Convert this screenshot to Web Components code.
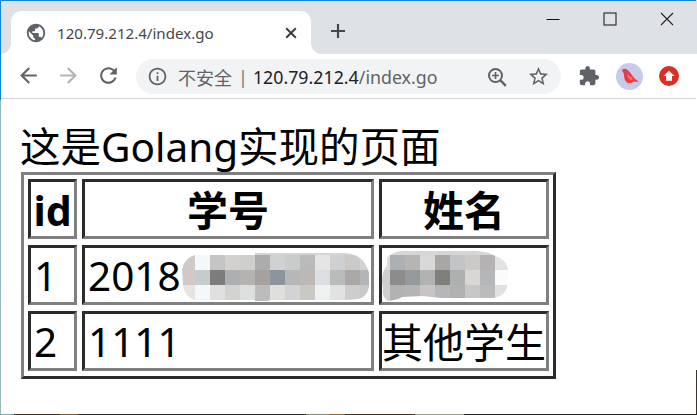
<!DOCTYPE html>
<html lang="zh"><head><meta charset="utf-8"><title>120.79.212.4/index.go</title>
<style>html,body{margin:0;padding:0;height:100%;overflow:hidden;background:#fff}</style></head>
<body>
<x-window>
  <x-tabstrip slot="strip"></x-tabstrip>
  <x-toolbar slot="bar"></x-toolbar>
  <x-page slot="page">
    <x-heading>这是Golang实现的页面</x-heading>
    <x-table>
      <x-cell head>id</x-cell><x-cell head>学号</x-cell><x-cell head>姓名</x-cell>
      <x-cell>1</x-cell>
      <x-cell>2018<x-mosaic x="95" y="5" w="190" h="49" t="17" ox="0" strip="2" stripc="#d3d4d4" d="M15 2L75 2L75 0L165 0Q185 2 189 20L189 34Q187 44 178 46L165 47L90 47L88 48L75 48L75 47L15 47Q5 45 3 32L2 17Q4 5 15 2Z" data-c="#cdcac8,#f4f8fa,#c5c5c5,#d2d1cf,#cfcfcd,#acacac,#d0d2d2,#c9cbcd,#bababa,#e5e5e5,#cfd0d2,#cbcac8,#d2d2d2;#d0c9c7,#c6ccce,#7c7c7c,#adafb1,#b5b3af,#a5a19e,#8d959c,#b6b8b8,#bcb9b4,#dbdfe2,#babcbb,#aaa8a6,#b3b5b8;#e6e4e2,#f4f8fb,#e0e0e0,#d3d3d1,#dcdfde,#bcbcbc,#dfdfdc,#d2d3d6,#c9c8c3,#eff0f2,#e1e3e2,#cdcdcb,#c6c8ca"></x-mosaic></x-cell>
      <x-cell><x-mosaic x="0" y="3" w="127" h="51" t="19" ox="-7" strip="4" stripc="#d6d6d6" d="M5 7Q10 1 20 0L95 0Q108 1 113 5Q124 8 126 18L126 33Q124 45 112 47L60 47L40 45L20 46Q15 49 6 50Q0 47 1 38L0 30Q0 20 5 14Z" data-c="#dcdcdc,#acb0b3,#b7b5b4,#d9d9d9,#a9a7a6,#c1c5c8,#cccac8,#b5b2b3,#e0e2e4;#cfcfcf,#8e8c8b,#959a9c,#b0b3b2,#807f7a,#aeb0b0,#d8d7d5,#b4b6b9,#fbfbfc;#cfcfcf,#b2b2b2,#b4b4b4,#c8c4c3,#b4b6ba,#b1b1b1,#c8c7c5,#bcbbbb,#dfe0e2"></x-mosaic></x-cell>
      <x-cell>2</x-cell><x-cell>1111</x-cell><x-cell big>其他学生</x-cell>
    </x-table>
  </x-page>
</x-window>
<script>
const FONT='"Noto Sans","Noto Sans CJK SC",sans-serif';
function def(name,html,init){customElements.define(name,class extends HTMLElement{
  constructor(){super();this.attachShadow({mode:'open'}).innerHTML=html}
  connectedCallback(){if(init)init(this)}
})}
const I=(s,d,c='#5f6368')=>`<svg width="${s}" height="${s}" viewBox="0 0 24 24" fill="${c}"><path d="${d}"/></svg>`;
const P={
 back:'M20 11H7.83l5.59-5.59L12 4l-8 8 8 8 1.41-1.41L7.83 13H20v-2z',
 fwd:'M12 4l-1.41 1.41L16.17 11H4v2h12.17l-5.58 5.59L12 20l8-8z',
 reload:'M17.65 6.35C16.2 4.9 14.21 4 12 4c-4.42 0-7.99 3.58-7.99 8s3.57 8 7.99 8c3.73 0 6.84-2.55 7.73-6h-2.08c-.82 2.33-3.04 4-5.65 4-3.31 0-6-2.69-6-6s2.69-6 6-6c1.66 0 3.14.69 4.22 1.78L13 11h7V4l-2.35 2.35z',
 globe:'M12 2C6.48 2 2 6.48 2 12s4.48 10 10 10 10-4.48 10-10S17.52 2 12 2zm-1 17.93c-3.95-.49-7-3.85-7-7.93 0-.62.08-1.21.21-1.79L9 15v1c0 1.1.9 2 2 2v1.93zm6.9-2.54c-.26-.81-1-1.39-1.9-1.39h-1v-3c0-.55-.45-1-1-1H8v-2h2c.55 0 1-.45 1-1V7h2c1.1 0 2-.9 2-2v-.41c2.93 1.19 5 4.06 5 7.41 0 2.08-.8 3.97-2.1 5.39z',
 info:'M11 7h2v2h-2zm0 4h2v6h-2zm1-9C6.48 2 2 6.48 2 12s4.48 10 10 10 10-4.48 10-10S17.52 2 12 2zm0 18c-4.41 0-8-3.59-8-8s3.59-8 8-8 8 3.59 8 8-3.59 8-8 8z',
 star:'M22 9.24l-7.19-.62L12 2 9.19 8.63 2 9.24l5.46 4.73L5.82 21 12 17.27 18.18 21l-1.63-7.03L22 9.24zM12 15.4l-3.76 2.27 1-4.28-3.32-2.88 4.38-.38L12 6.1l1.71 4.04 4.38.38-3.32 2.88 1 4.28L12 15.4z',
 puzzle:'M20.5 11H19V7c0-1.1-.9-2-2-2h-4V3.5C13 2.12 11.88 1 10.5 1S8 2.12 8 3.5V5H4c-1.1 0-1.99.9-1.99 2v3.8H3.5c1.49 0 2.7 1.21 2.7 2.7s-1.21 2.7-2.7 2.7H2V20c0 1.1.9 2 2 2h3.8v-1.5c0-1.49 1.21-2.7 2.7-2.7 1.49 0 2.7 1.21 2.7 2.7V22H17c1.1 0 2-.9 2-2v-4h1.5c1.38 0 2.5-1.12 2.5-2.5S21.88 11 20.5 11z'
};
def('x-window',`<style>
:host{display:block;height:415px;width:697px;box-sizing:border-box;padding:1px 1px 1px 1px;
 background:
  linear-gradient(90deg,#7fa5ab 0 14px,#3a3028 14px 60px,#7a5a30 60px 78px,#2f2a26 78px 306px,#8a8a78 306px 330px,#8a6a40 330px 345px,#3a3026 345px 415px,#9a9d90 415px 464px,#2c2622 464px) bottom/100% 1px no-repeat,
  linear-gradient(#0f86d8 0 100px,#8fbcc4 100px 300px,#9ab8bd 300px) left/1px 100% no-repeat,
  linear-gradient(#dee1e6 0 54px,#fff 54px 370px,#3a332c 370px) right/1px 100% no-repeat,
  linear-gradient(#0f86d8,#0f86d8) top/100% 1px no-repeat,#fff}
.in{display:flex;flex-direction:column;height:100%;background:#fff;font-family:${FONT}}
</style><div class="in"><slot name="strip"></slot><slot name="bar"></slot><slot name="page"></slot></div>`);
def('x-tabstrip',`<style>
:host{display:flex;height:53px;background:#dee1e6;padding:0 1px 0 10px;box-sizing:border-box;font-family:${FONT}}
.tab{position:relative;width:300px;height:43px;margin-top:10px;background:#fff;border-radius:10px 10px 0 0;display:flex;align-items:center;box-sizing:border-box;padding:0 11px 0 14px}
.tab:before,.tab:after{content:"";position:absolute;bottom:0;width:10px;height:10px}
.tab:before{left:-10px;background:radial-gradient(circle at 0 0,#dee1e6 9.5px,#fff 10px)}
.tab:after{right:-10px;background:radial-gradient(circle at 100% 0,#dee1e6 9.5px,#fff 10px)}
.t{font-size:15.1px;color:#45474b;margin-left:10px;flex:1;white-space:nowrap}
svg{display:block;flex:none}
.fav{width:22px;height:22px}
.x{margin-right:2px}
.plus{margin:20px 0 0 17px;width:20px;height:20px}
.sp{flex:1}
.ctl{width:57px;height:36px;display:flex;align-items:center;justify-content:center}
</style>
<div class="tab">
 <span class="fav">${I(22,P.globe)}</span>
 <span class="t">120.79.212.4/index.go</span>
 <svg class="x" width="14" height="14" viewBox="0 0 14 14"><path d="M2.2 2.2l9.6 9.6M11.8 2.2l-9.6 9.6" stroke="#3c4043" stroke-width="2" fill="none"/></svg>
</div>
<svg class="plus" viewBox="0 0 20 20"><path d="M10 3v14M3 10h14" stroke="#45484c" stroke-width="2.2"/></svg>
<span class="sp"></span>
<span class="ctl"><svg width="14" height="14" viewBox="0 0 14 14"><path d="M0.5 7.5h13" stroke="#111" stroke-width="1"/></svg></span>
<span class="ctl"><svg width="14" height="14" viewBox="0 0 14 14"><rect x="1" y="1" width="12" height="12" fill="none" stroke="#111"/></svg></span>
<span class="ctl"><svg width="14" height="14" viewBox="0 0 14 14"><path d="M1 1l12 12M13 1L1 13" stroke="#222" stroke-width="1.1" fill="none"/></svg></span>`);
def('x-toolbar',`<style>
:host{display:flex;height:45px;box-sizing:border-box;border-bottom:1px solid #d3d5d8;padding-left:7px;background:#fff;font-family:${FONT}}
.b{width:40px;height:43px;display:flex;align-items:center;justify-content:center;flex:none}
svg{display:block;flex:none}
.pill{flex:none;width:425px;height:35px;margin:5px 0 0 8px;border-radius:18px;background:#f1f3f4;display:flex;align-items:center;box-sizing:border-box;padding-left:11px;white-space:nowrap}
.warn{font-size:18px;color:#5f6368;margin-left:10px;font-family:"Noto Sans CJK SC",sans-serif}
.sep{font-size:18px;color:#777;margin:0 5px 0 6px;line-height:1}
.url{font-size:17.8px;color:#5f6368}
.url b{font-weight:400;color:#202124}
.g{flex:1}
.z{margin-right:19px}
.s{margin-right:11px}
.right{display:flex;margin-left:8px}
</style>
<span class="b">${I(25,P.back)}</span><span class="b">${I(25,P.fwd,'#b1b4b8')}</span><span class="b">${I(25,P.reload)}</span>
<div class="pill">
 ${I(21,P.info)}
 <span class="warn">不安全</span><span class="sep">|</span><span class="url"><b>120.79.212.4</b>/index.go</span>
 <span class="g"></span>
 <svg class="z" width="22" height="22" viewBox="0 0 22 22" fill="none" stroke="#5f6368" stroke-width="2"><circle cx="9.5" cy="9.5" r="6.5"/><path d="M14.2 14.2l5.6 5.6" stroke-width="2.4"/><path d="M9.5 6v7M6 9.5h7" stroke-width="1.7"/></svg>
 ${I(23,P.star).replace('<svg','<svg class="s"')}
</div>
<div class="right">
 <span class="b">${I(22,P.puzzle)}</span>
 <span class="b" style="height:44px"><svg width="27" height="27" viewBox="0 0 27 27"><circle cx="13.5" cy="13.5" r="13.500" fill="#c6cbe9"/><path d="M6 7Q8 5 11 6.500Q13 8 14.500 10L18 15L23 19L18 18.500Q15 21 12 20Q8 18 8 12Q8 10 6.500 8.500Z" fill="#ea3b42"/><path d="M11 11Q15 13 17 17Q12 17 11 11Z" fill="#f47a6f"/><path d="M12 20l.5 2M14.500 20l.5 2" stroke="#dfa0b0" stroke-width=".8"/></svg></span>
 <span class="b" style="height:44px"><svg width="20" height="20" viewBox="0 0 20 20"><circle cx="10" cy="10" r="10" fill="#dd2e25"/><path d="M10 4.700l5.500 5.300H13v4.800H7V10H4.500z" fill="#fff"/></svg></span>
</div>`);
def('x-page',`<style>:host{display:block;flex:1;background:#fff;padding:20px 20px 0;box-sizing:border-box;overflow:hidden;font-family:${FONT};color:#000}</style><slot></slot>`);
def('x-heading',`<style>:host{display:block;font-size:40.5px;line-height:56px;height:53px;margin-left:-1px;white-space:nowrap}</style><slot></slot>`);
def('x-table',`<style>:host{display:inline-grid;grid-template-columns:49px 292px 170px;grid-auto-rows:60px;column-gap:5px;row-gap:6px;padding:4px 4px 5px;border:3px solid;border-color:#808080 #2b2b2b #2b2b2b #808080;vertical-align:top;font-size:40.5px}</style><slot></slot>`);
def('x-cell',`<style>:host{display:flex;align-items:center;position:relative;box-sizing:border-box;border:3px solid;border-color:#2b2b2b #808080 #808080 #2b2b2b;padding:2px 3px 0;white-space:nowrap;line-height:54px}
:host([head]){font-weight:700;justify-content:center;font-size:41px}
:host([big]){font-size:41px;justify-content:center;padding:2px 0 0}</style><slot></slot>`);
def('x-mosaic',`<style>:host{position:absolute;display:block}svg{display:block}</style><svg></svg>`,el=>{
 const g=a=>+el.getAttribute(a);
 const x=g('x'),y=g('y'),w=g('w'),h=g('h'),t=g('t'),ox=g('ox'),st=g('strip');
 el.style.left=x+'px';el.style.top=y+'px';
 const rows=el.dataset.c.split(';').map(s=>s.split(','));
 const id='c'+x;
 const cw=15;
 let s=`<defs><clipPath id="${id}"><path d="${el.getAttribute('d')}"/></clipPath></defs><g clip-path="url(#${id})">`;
 s+=`<rect width="${w}" height="${st}" fill="${el.getAttribute('stripc')}"/>`;
 rows.forEach((row,j)=>row.forEach((c,i)=>{
  const top=j==0?st:t+(j-1)*cw, ht=j==0?t-st:(j==2?h-top:cw);
  const X=i*cw+ox;
  const wd=(i==row.length-1)?cw+20:cw;
  s+=`<rect x="${X}" y="${top}" width="${wd}" height="${ht}" fill="${c}"/>`;
 }));
 s+='</g>';
 const svg=el.shadowRoot.querySelector('svg');
 svg.setAttribute('width',w);svg.setAttribute('height',h);svg.innerHTML=s;
});
</script>
</body></html>
